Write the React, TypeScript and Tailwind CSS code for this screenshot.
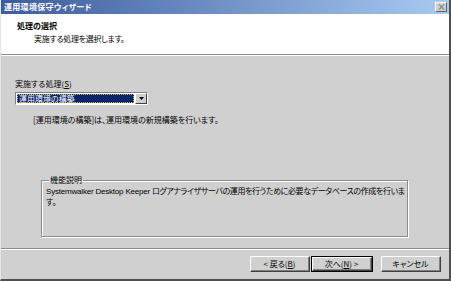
import React from 'react';

const jp = "font-['MS_UI_Gothic','Noto_Sans_CJK_JP',sans-serif] [font-feature-settings:'palt']";

const Btn = ({ children, isDefault = false, w }: { children: React.ReactNode; isDefault?: boolean; w: string }) => (
  <div className={`${w} h-[16px] ${isDefault ? 'border border-black' : ''}`}>
    <div className="h-full border-t border-l border-white border-r border-b border-r-[#404040] border-b-[#404040]">
      <div className="h-full flex items-center justify-center border-r border-b border-[#808080] text-[8px] leading-none text-black">
        {children}
      </div>
    </div>
  </div>
);

const App = () => {
  return (
    <div className={`w-[451px] h-[281px] bg-[#d0d0d0] flex flex-col border-l border-l-[#e6e6e6] border-r-2 border-r-[#505050] border-b-2 border-b-[#505050] overflow-hidden ${jp}`}>
      {/* title bar */}
      <div className="h-[14px] flex items-center justify-between pl-[3px] pr-[2px] bg-gradient-to-r from-[#3d5c9c] to-[#a8cbf2]">
        <span className="text-[8px] font-bold text-white leading-none tracking-[0.3px]">運用環境保守ウィザード</span>
        <div className="w-[12px] h-[10px] bg-[#d0d0d0] border-t border-l border-white border-r border-b border-r-[#606060] border-b-[#606060] flex items-center justify-center">
          <svg width="7" height="6" viewBox="0 0 7 6">
            <path d="M1 0.5 L6 5.5 M6 0.5 L1 5.5" stroke="#8a8a8a" strokeWidth="1.2" />
          </svg>
        </div>
      </div>

      {/* header */}
      <div className="h-[40px] bg-white pl-[16px] pt-[8px] text-black">
        <div className="text-[8px] font-bold leading-none">処理の選択</div>
        <div className="text-[8px] leading-none mt-[5px] pl-[17px] tracking-[-0.3px]">実施する処理を選択します。</div>
      </div>
      <div className="border-t border-t-[#8c8c8c] border-b border-b-white" />

      {/* body */}
      <div className="flex-1 flex flex-col pl-[14px] pt-[24px] text-black text-[8px] leading-none">
        <div>
          実施する処理(<span className="underline">S</span>)
        </div>
        <div className="mt-[4px] w-[133px] h-[13px] bg-white border-t border-l border-[#808080] border-r border-b border-r-white border-b-white flex">
          <div className="flex-1 p-[1px]">
            <div className="h-full bg-[#0a246a] text-white flex items-center pl-[2px] outline-1 outline-dotted outline-[#d0c060] -outline-offset-1">
              運用環境の構築
            </div>
          </div>
          <div className="w-[12px] h-full bg-[#d0d0d0] border-t border-l border-white border-r border-b border-r-[#404040] border-b-[#404040] flex items-center justify-center">
            <svg width="5" height="3" viewBox="0 0 5 3">
              <path d="M0 0 H5 L2.5 3 Z" fill="black" />
            </svg>
          </div>
        </div>
        <div className="mt-[11px] pl-[18px]">[運用環境の構築]は、運用環境の新規構築を行います。</div>

        <fieldset className="mt-[52px] ml-[26px] w-[366px] h-[61px] border border-[#8c8c8c] shadow-[inset_1px_1px_0_#fff,1px_1px_0_#fff] pl-[4px] pr-[2px]">
          <legend className="ml-[3px] px-[1px] text-[8px] leading-[8px]">機能説明</legend>
          <div className="whitespace-nowrap leading-[10px] mt-[2px]">
            <span className="font-['Liberation_Sans',sans-serif] tracking-[-0.2px]">Systemwalker Desktop Keeper </span>
            <span className="tracking-[-0.4px]">ログアナライザサーバの運用を行うために必要なデータベースの作成を行いま</span>
            <br />
            す。
          </div>
        </fieldset>
      </div>

      <div className="border-t border-t-[#8c8c8c] border-b border-b-white" />

      {/* buttons */}
      <div className="h-[29px] flex items-start justify-end pt-[6px] pr-[8px]">
        <Btn w="w-[60px]">
          &lt; 戻る(<span className="underline">B</span>)
        </Btn>
        <div className="ml-[1px]">
          <Btn w="w-[62px]" isDefault>
            次へ(<span className="underline">N</span>) &gt;
          </Btn>
        </div>
        <div className="ml-[8px]">
          <Btn w="w-[60px]">キャンセル</Btn>
        </div>
      </div>
    </div>
  );
};

export default App;
